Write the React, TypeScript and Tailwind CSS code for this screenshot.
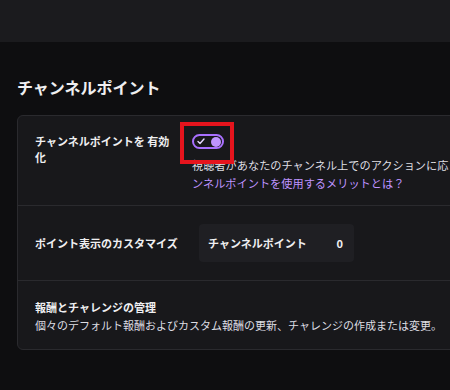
const font = { fontFamily: '"Noto Sans CJK JP", "Noto Sans", sans-serif' };

const Toggle = () => (
  <div className="relative w-[32px] h-[15px]">
    <div className="w-full h-full rounded-full border-2 border-[#a970ff] bg-[#18181b] flex items-center justify-between pl-[3px] pr-[1px]">
      <svg width="8" height="7" viewBox="0 0 8 7" fill="none">
        <path d="M1 3.5 L3 5.5 L7 1" stroke="#e5d6ff" strokeWidth="1.4" strokeLinecap="round" strokeLinejoin="round" />
      </svg>
      <span className="w-[10px] h-[10px] rounded-full bg-[#bf94ff]" />
    </div>
    <div className="absolute -left-[12px] -top-[12px] w-[54px] h-[42px] border-4 border-[#e5141d]" />
  </div>
);

export default function App() {
  return (
    <div className="w-[450px] h-[390px] bg-[#0e0e10] overflow-hidden text-[#efeff1]" style={font}>
      <div className="h-[42px] bg-[#1b1b1e]" />
      <div className="pl-[17px] pt-[35px]">
        <h2 className="text-[16px] leading-[20px] font-bold">チャンネルポイント</h2>

        <div className="mt-[18px] w-[600px] bg-[#18181b] border border-[#2a2a2e] rounded-[6px]">
          {/* enable toggle */}
          <div className="h-[90px] border-b border-[#2a2a2e] flex pl-[17px] pt-[17px]">
            <div className="w-[140px] shrink-0 text-[11px] leading-[16px] font-bold">
              チャンネルポイントを 有効化
            </div>
            <div className="ml-[17px] pt-[1px]">
              <Toggle />
              <div className="mt-[7px] text-[11.2px] leading-[18px] whitespace-nowrap">
                <div className="text-[#dedee3]">
                  視聴者があなたのチャンネル上でのアクションに応じて報酬を獲得できます。
                  <span className="text-[#bf94ff]">チャ</span>
                </div>
                <div className="text-[#bf94ff]">ンネルポイントを使用するメリットとは？</div>
              </div>
            </div>
          </div>

          {/* display name */}
          <div className="h-[75px] border-b border-[#2a2a2e] flex items-center pl-[17px]">
            <div className="w-[164px] shrink-0 text-[11px] leading-[16px] font-bold whitespace-nowrap">
              ポイント表示のカスタマイズ
            </div>
            <div className="w-[155px] h-[38px] rounded-[4px] bg-[#1f1f23] flex items-center justify-between pl-[9px] pr-[11px] text-[11px] font-bold">
              <span>チャンネルポイント</span>
              <span>0</span>
            </div>
          </div>

          {/* rewards */}
          <div className="h-[68px] pl-[17px] pt-[17px] text-[11px] leading-[18px]">
            <div className="font-bold">報酬とチャレンジの管理</div>
            <div className="text-[#dedee3] whitespace-nowrap">
              個々のデフォルト報酬およびカスタム報酬の更新、チャレンジの作成または変更。
            </div>
          </div>
        </div>
      </div>
    </div>
  );
}
